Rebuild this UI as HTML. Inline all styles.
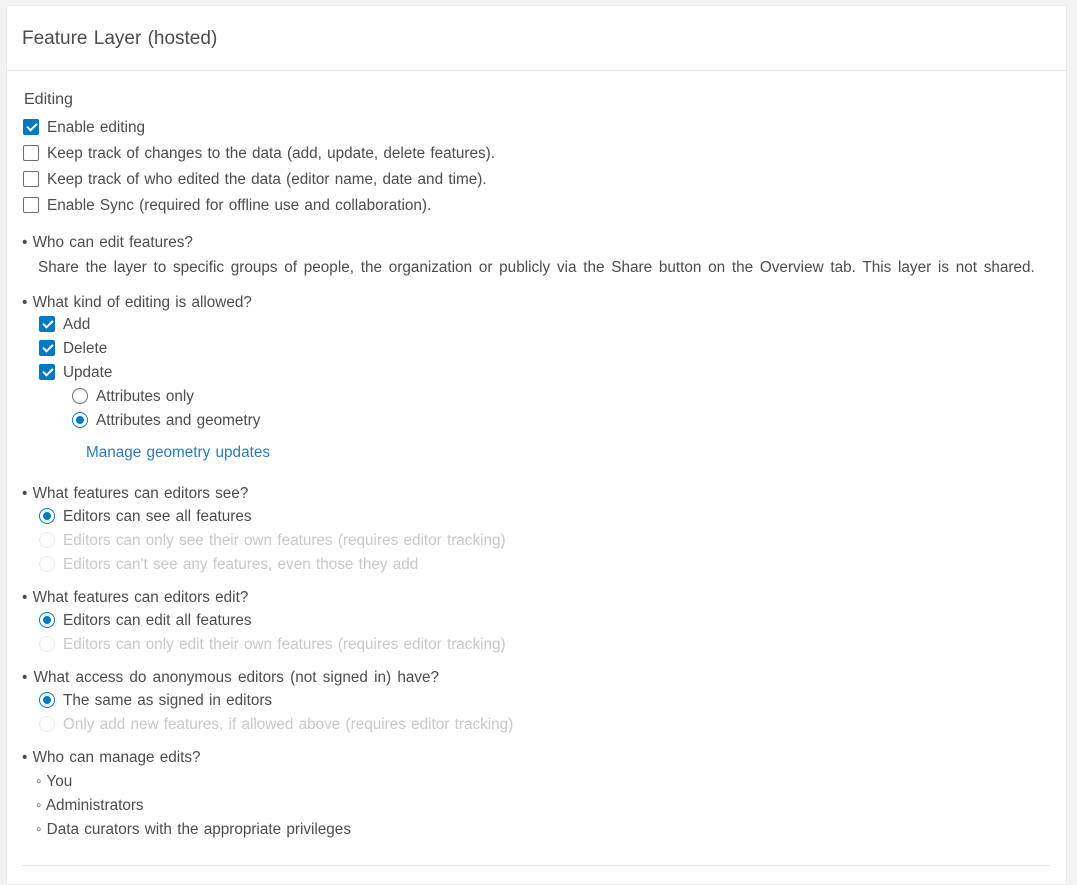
<!DOCTYPE html>
<html><head><style>
html,body{margin:0;padding:0;}
body{width:1077px;height:876px;background:#f3f3f3;position:relative;overflow:hidden;font-family:"Liberation Sans",sans-serif;color:#4c4c4c;}
.card{position:absolute;left:6px;top:5px;width:1061px;height:880px;background:#fff;border:1px solid #eaeaea;box-sizing:border-box;}
.hdr{position:absolute;left:6px;top:70px;width:1061px;height:1px;background:#e6e6e6;}
.t{position:absolute;font-size:15.3px;line-height:20px;white-space:nowrap;word-spacing:1px;margin-top:1px;}
.dis{color:#c8c8c8;}
.cb{position:absolute;width:16px;height:16px;box-sizing:border-box;border:1px solid #6e6e6e;border-radius:2px;background:#fff;}
.cb.on{background:#007ac2;border-color:#007ac2;}
.cb.on::after{content:"";position:absolute;left:4.5px;top:1px;width:4px;height:8px;border:solid #fff;border-width:0 2.2px 2.2px 0;transform:rotate(45deg);}
.rd{position:absolute;width:16px;height:16px;box-sizing:border-box;border:1px solid #6e6e6e;border-radius:50%;background:#fff;}
.rd.on{border:1.5px solid #007ac2;}
.rd.on::after{content:"";position:absolute;left:2.5px;top:2.5px;width:8px;height:8px;border-radius:50%;background:#007ac2;}
.rd.dis{border-color:#ececec;}
</style></head><body>
<div class="card"></div>
<div class="hdr"></div>
<div class="t" style="left:22px;top:26px;font-size:19px;line-height:24px;">Feature Layer (hosted)</div>

<div class="t" style="left:24px;top:89px;font-size:16px;">Editing</div>
<div class="cb on" style="left:23px;top:119px"></div><div class="t" style="left:47px;top:117px">Enable editing</div>
<div class="cb" style="left:23px;top:145px"></div><div class="t" style="left:47px;top:143px">Keep track of changes to the data (add, update, delete features).</div>
<div class="cb" style="left:23px;top:171px"></div><div class="t" style="left:47px;top:169px">Keep track of who edited the data (editor name, date and time).</div>
<div class="cb" style="left:23px;top:197px"></div><div class="t" style="left:47px;top:195px">Enable Sync (required for offline use and collaboration).</div>

<div class="t" style="left:22px;top:232px">•&nbsp;Who can edit features?</div>
<div class="t" style="left:38px;top:257px;word-spacing:2.5px">Share the layer to specific groups of people, the organization or publicly via the Share button on the Overview tab. This layer is not shared.</div>

<div class="t" style="left:22px;top:292px">•&nbsp;What kind of editing is allowed?</div>
<div class="cb on" style="left:39px;top:316px"></div><div class="t" style="left:63px;top:314px">Add</div>
<div class="cb on" style="left:39px;top:340px"></div><div class="t" style="left:63px;top:338px">Delete</div>
<div class="cb on" style="left:39px;top:364px"></div><div class="t" style="left:63px;top:362px">Update</div>
<div class="rd" style="left:72px;top:388px"></div><div class="t" style="left:96px;top:386px">Attributes only</div>
<div class="rd on" style="left:72px;top:412px"></div><div class="t" style="left:96px;top:410px">Attributes and geometry</div>
<div class="t" style="left:86px;top:442px;color:#2b7bb9">Manage geometry updates</div>

<div class="t" style="left:22px;top:483px">•&nbsp;What features can editors see?</div>
<div class="rd on" style="left:39px;top:508px"></div><div class="t" style="left:63px;top:506px">Editors can see all features</div>
<div class="rd dis" style="left:39px;top:532px"></div><div class="t dis" style="left:63px;top:530px">Editors can only see their own features (requires editor tracking)</div>
<div class="rd dis" style="left:39px;top:556px"></div><div class="t dis" style="left:63px;top:554px">Editors can't see any features, even those they add</div>

<div class="t" style="left:22px;top:587px">•&nbsp;What features can editors edit?</div>
<div class="rd on" style="left:39px;top:612px"></div><div class="t" style="left:63px;top:610px">Editors can edit all features</div>
<div class="rd dis" style="left:39px;top:636px"></div><div class="t dis" style="left:63px;top:634px">Editors can only edit their own features (requires editor tracking)</div>

<div class="t" style="left:22px;top:667px;word-spacing:2px">•&nbsp;What access do anonymous editors (not signed in) have?</div>
<div class="rd on" style="left:39px;top:692px"></div><div class="t" style="left:63px;top:690px">The same as signed in editors</div>
<div class="rd dis" style="left:39px;top:716px"></div><div class="t dis" style="left:63px;top:714px">Only add new features, if allowed above (requires editor tracking)</div>

<div class="t" style="left:22px;top:747px">•&nbsp;Who can manage edits?</div>
<div class="t" style="left:36px;top:771px">◦ You</div>
<div class="t" style="left:36px;top:795px">◦ Administrators</div>
<div class="t" style="left:36px;top:819px">◦ Data curators with the appropriate privileges</div>

<div style="position:absolute;left:22px;top:865px;width:1028px;height:1px;background:#e6e6e6"></div>
</body></html>
